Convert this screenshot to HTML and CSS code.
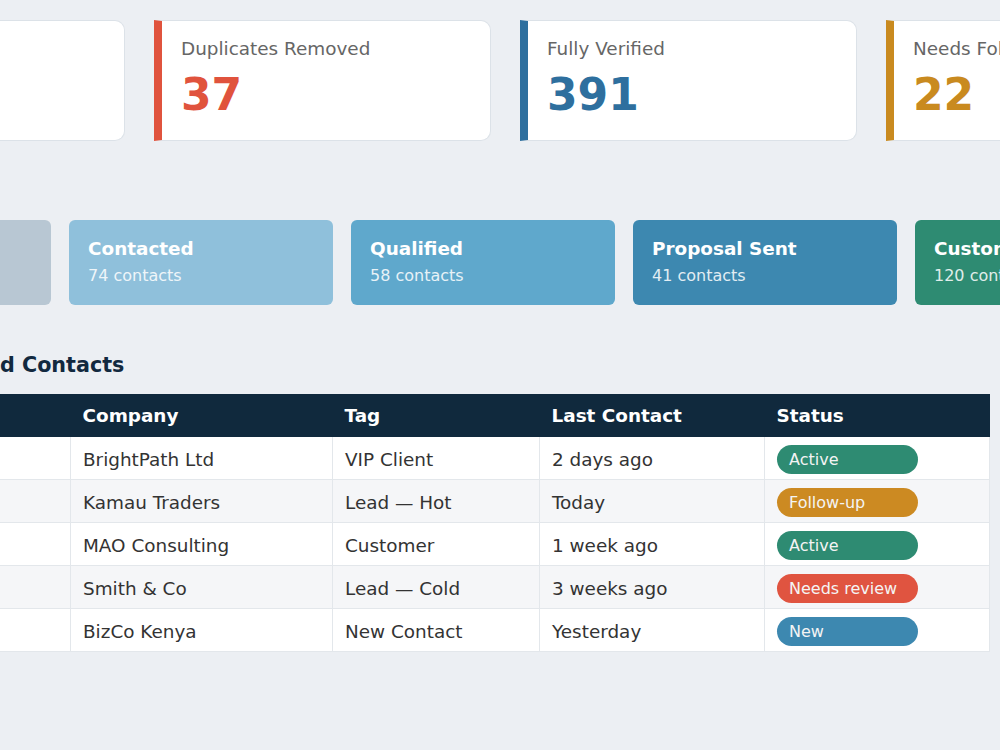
FILE: index.html
```html
<!DOCTYPE html>
<html lang="en">
<head>
<meta charset="utf-8">
<title>Contacts Dashboard</title>
<link rel="stylesheet" href="styles.css">
</head>
<body>
<div class="page">

  <div class="stats">
    <div class="stat stat-total">
      <div class="stat-label">Total Contacts</div>
      <div class="stat-value">428</div>
    </div>
    <div class="stat stat-dupes">
      <div class="stat-label">Duplicates Removed</div>
      <div class="stat-value">37</div>
    </div>
    <div class="stat stat-verified">
      <div class="stat-label">Fully Verified</div>
      <div class="stat-value">391</div>
    </div>
    <div class="stat stat-follow">
      <div class="stat-label">Needs Follow-up</div>
      <div class="stat-value">22</div>
    </div>
  </div>

  <div class="pipeline">
    <div class="stage stage-new">
      <div class="stage-title">New</div>
      <div class="stage-count">135 contacts</div>
    </div>
    <div class="stage stage-contacted">
      <div class="stage-title">Contacted</div>
      <div class="stage-count">74 contacts</div>
    </div>
    <div class="stage stage-qualified">
      <div class="stage-title">Qualified</div>
      <div class="stage-count">58 contacts</div>
    </div>
    <div class="stage stage-proposal">
      <div class="stage-title">Proposal Sent</div>
      <div class="stage-count">41 contacts</div>
    </div>
    <div class="stage stage-customer">
      <div class="stage-title">Customer</div>
      <div class="stage-count">120 contacts</div>
    </div>
  </div>

  <h2 class="section-title">Recently Updated Contacts</h2>

  <table class="contacts">
    <colgroup>
      <col class="col-name">
      <col class="col-company">
      <col class="col-tag">
      <col class="col-last">
      <col class="col-status">
    </colgroup>
    <thead>
      <tr>
        <th>Name</th>
        <th>Company</th>
        <th>Tag</th>
        <th>Last Contact</th>
        <th>Status</th>
      </tr>
    </thead>
    <tbody>
      <tr>
        <td>Grace Wanjiku</td>
        <td>BrightPath Ltd</td>
        <td>VIP Client</td>
        <td>2 days ago</td>
        <td><span class="badge badge-active">Active</span></td>
      </tr>
      <tr>
        <td>Peter Kamau</td>
        <td>Kamau Traders</td>
        <td>Lead — Hot</td>
        <td>Today</td>
        <td><span class="badge badge-follow">Follow-up</span></td>
      </tr>
      <tr>
        <td>Mary Otieno</td>
        <td>MAO Consulting</td>
        <td>Customer</td>
        <td>1 week ago</td>
        <td><span class="badge badge-active">Active</span></td>
      </tr>
      <tr>
        <td>John Smith</td>
        <td>Smith &amp; Co</td>
        <td>Lead — Cold</td>
        <td>3 weeks ago</td>
        <td><span class="badge badge-review">Needs review</span></td>
      </tr>
      <tr>
        <td>Ann Njeri</td>
        <td>BizCo Kenya</td>
        <td>New Contact</td>
        <td>Yesterday</td>
        <td><span class="badge badge-new">New</span></td>
      </tr>
    </tbody>
  </table>

</div>
</body>
</html>
```

FILE: styles.css
```css
body {
  margin: 0;
  background-color: #eceff3;
  font-family: "DejaVu Sans", Verdana, sans-serif;
  color: #333;
  overflow: hidden;
}

.page {
  width: 1202px;
  margin-left: -213px;
  padding-top: 20px;
}

/* stat cards */
.stats {
  display: flex;
  gap: 29px;
  margin-left: 1px;
}
.stat {
  flex: 0 0 337px;
  box-sizing: border-box;
  background-color: #fff;
  border: 1px solid #dce2e8;
  border-left: 8px solid #999;
  border-radius: 0 10px 10px 0;
  padding: 17px 19px 20px;
}
.stat-label {
  font-size: 18.4px;
  line-height: 22px;
  color: #666;
}
.stat-value {
  margin-top: 10px;
  font-size: 44px;
  line-height: 50px;
  font-weight: bold;
}
.stat-total { border-left-color: #10293d; }
.stat-total .stat-value { color: #10293d; }
.stat-dupes { border-left-color: #e0533d; }
.stat-dupes .stat-value { color: #e0533d; }
.stat-verified { border-left-color: #2e6f9e; }
.stat-verified .stat-value { color: #2e6f9e; }
.stat-follow { border-left-color: #c98a1f; }
.stat-follow .stat-value { color: #c98a1f; }

/* pipeline */
.pipeline {
  display: flex;
  gap: 18px;
  margin-top: 79px;
}
.stage {
  flex: 0 0 264px;
  box-sizing: border-box;
  height: 85px;
  border-radius: 6px;
  padding: 18px 19px 0;
  color: #fff;
}
.stage-title {
  font-size: 18.4px;
  line-height: 22px;
  font-weight: bold;
}
.stage-count {
  margin-top: 6px;
  font-size: 16px;
  line-height: 20px;
  opacity: 0.85;
}
.stage-new { background-color: #b8c7d3; }
.stage-contacted { background-color: #8fc0db; }
.stage-qualified { background-color: #5fa8cc; }
.stage-proposal { background-color: #3d88b0; }
.stage-customer { background-color: #2e8b72; }

/* table */
.section-title {
  margin: 48px 0 17px;
  padding-left: 20px;
  font-size: 20.7px;
  line-height: 24px;
  color: #12293f;
}
.contacts {
  width: 100%;
  table-layout: fixed;
  border-collapse: collapse;
  background-color: #fff;
  font-size: 18.4px;
}
.col-name { width: 283px; }
.col-company { width: 262px; }
.col-tag { width: 207px; }
.col-last { width: 225px; }
.col-status { width: 225px; }

.contacts th {
  height: 43px;
  padding: 0 12px;
  background-color: #10293d;
  color: #fff;
  text-align: left;
  line-height: 21px;
}
.contacts td {
  height: 40px;
  padding: 2px 12px 0;
  line-height: 21px;
  border: 1px solid #e3e7eb;
  border-top: none;
  white-space: nowrap;
  color: #333;
}
.contacts tbody tr:nth-child(even) td {
  background-color: #f5f6f8;
}

.badge {
  display: inline-block;
  box-sizing: border-box;
  width: 141px;
  height: 29px;
  line-height: 29px;
  padding: 0 12px;
  border-radius: 15px;
  font-size: 16px;
  color: #f4f4f4;
  vertical-align: middle;
}
.badge-active { background-color: #2e8b72; }
.badge-follow { background-color: #cc8a22; }
.badge-review { background-color: #e05440; }
.badge-new { background-color: #3d88b0; }
```
